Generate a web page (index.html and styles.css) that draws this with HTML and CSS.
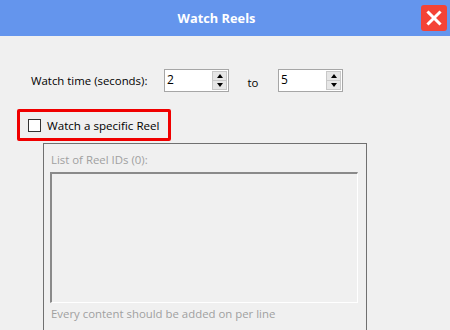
FILE: index.html
```html
<!DOCTYPE html>
<html>
<head>
<meta charset="utf-8">
<link rel="stylesheet" href="styles.css">
</head>
<body>
<div class="window">
  <div class="titlebar">
    <div class="title">Watch Reels</div>
    <div class="close">
      <svg width="16" height="16" viewBox="0 0 16 16"><path d="M2.5 2.5 L13.5 13.5 M13.5 2.5 L2.5 13.5" stroke="#fff" stroke-width="3" stroke-linecap="square"/></svg>
    </div>
  </div>
  <div class="content">
    <div class="time-row">
      <span class="label">Watch time (seconds):</span>
      <div class="spin"><span class="val">2</span><div class="btns"><div class="btn"><span class="up"></span></div><div class="btn"><span class="down"></span></div></div></div>
      <span class="to">to</span>
      <div class="spin"><span class="val">5</span><div class="btns"><div class="btn"><span class="up"></span></div><div class="btn"><span class="down"></span></div></div></div>
    </div>
    <div class="highlight">
      <span class="check"></span>
      <span class="check-label">Watch a specific Reel</span>
    </div>
    <div class="group">
      <div class="group-label">List of Reel IDs (0):</div>
      <div class="textarea"></div>
      <div class="hint">Every content should be added on per line</div>
    </div>
  </div>
</div>
</body>
</html>
```
FILE: styles.css
```css
html, body { margin: 0; padding: 0; }
body {
  width: 450px;
  height: 330px;
  overflow: hidden;
  background: #f0f0f0;
  font-family: "Open Sans", "Noto Sans", sans-serif;
  font-size: 11.4px;
  color: #000;
}
.window { display: flex; flex-direction: column; height: 330px; }
.titlebar {
  height: 36px;
  background: #6495ed;
  display: flex;
  align-items: center;
  position: relative;
}
.title {
  flex: 1;
  text-align: center;
  color: #fff;
  font-weight: bold;
  font-size: 12.8px;
  padding-right: 17px;
}
.close {
  position: absolute;
  left: 421px;
  top: 5px;
  width: 26px;
  height: 26px;
  background: #f44336;
  border-radius: 3px;
  display: flex;
  align-items: center;
  justify-content: center;
}
.content { flex: 1; display: flex; flex-direction: column; }
.time-row {
  margin-top: 33px;
  display: flex;
  align-items: center;
  height: 23px;
  padding-left: 31px;
}
.label { width: 133px; }
.spin {
  width: 63px;
  height: 21px;
  border: 1px solid #a6a6a6;
  background: #fff;
  display: flex;
  justify-content: space-between;
}
.val { padding-left: 2px; line-height: 19px; font-size: 12px; }
.btns {
  width: 15px;
  margin: 1px 1px 1px 0;
  display: flex;
  flex-direction: column;
}
.btn {
  flex: 1;
  background: #e6e6e6;
  border: 1px solid #c8c8c8;
  display: flex;
  align-items: center;
  justify-content: center;
}
.btn + .btn { border-top: none; }
.up { width: 0; height: 0; border-left: 3.5px solid transparent; border-right: 3.5px solid transparent; border-bottom: 4px solid #000; }
.down { width: 0; height: 0; border-left: 3.5px solid transparent; border-right: 3.5px solid transparent; border-top: 4px solid #000; }
.to { width: 49px; text-align: center; padding-top: 3px; padding-right: 1px; box-sizing: border-box; }
.highlight {
  margin: 17px 0 0 17px;
  width: 148px;
  height: 26px;
  border: 3px solid #f00000;
  border-radius: 2px;
  display: flex;
  align-items: center;
}
.check {
  width: 11px;
  height: 11px;
  border: 1px solid #333;
  background: #fff;
  margin-left: 8px;
  margin-right: 6px;
}
.check-label { font-size: 11.6px; }
.group {
  margin: 2px 0 0 43px;
  width: 322px;
  flex: 1;
  border: 1px solid #707070;
  border-bottom: none;
  display: flex;
  flex-direction: column;
  color: #a0a0a0;
}
.group-label { margin: 8px 0 0 7px; height: 20px; }
.textarea {
  margin-left: 6px;
  width: 305px;
  height: 128px;
  border-top: 2px solid #8a8a8a;
  border-left: 2px solid #8a8a8a;
  border-right: 1px solid #fff;
  border-bottom: 1px solid #fff;
}
.hint { margin: 3px 0 0 7px; }
```
